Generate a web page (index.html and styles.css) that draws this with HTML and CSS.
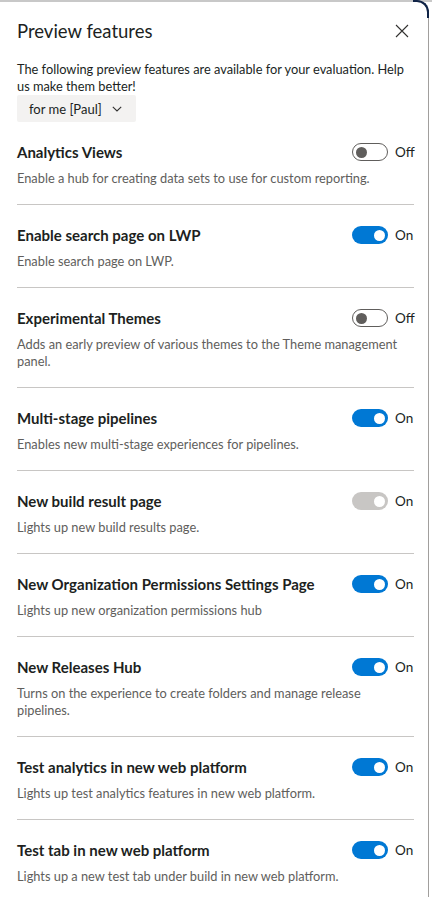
FILE: index.html
```html
<!DOCTYPE html>
<html lang="en">
<head>
<meta charset="utf-8">
<title>Preview features</title>
<link rel="stylesheet" href="styles.css">
</head>
<body>
<div class="frame">
  <div class="panel">
    <div class="header">
      <h1 class="title">Preview features</h1>
      <button class="close" aria-label="Close">
        <svg width="14" height="14" viewBox="0 0 14 14"><path d="M1 1 L13 13 M13 1 L1 13" stroke="#323130" stroke-width="1.1" fill="none"/></svg>
      </button>
    </div>
    <p class="intro">The following preview features are available for your evaluation. Help us make them better!</p>
    <button class="scope">for me [Paul]
      <svg width="10" height="6" viewBox="0 0 10 6"><path d="M0.8 0.8 L5 5 L9.2 0.8" stroke="#323130" stroke-width="1.1" fill="none"/></svg>
    </button>
    <ul class="features">
      <li class="feature">
        <div class="row"><span class="name">Analytics Views</span><span class="toggle off"><span class="knob"></span></span><span class="state">Off</span></div>
        <p class="desc">Enable a hub for creating data sets to use for custom reporting.</p>
      </li>
      <li class="feature">
        <div class="row"><span class="name">Enable search page on LWP</span><span class="toggle on"><span class="knob"></span></span><span class="state">On</span></div>
        <p class="desc">Enable search page on LWP.</p>
      </li>
      <li class="feature">
        <div class="row"><span class="name">Experimental Themes</span><span class="toggle off"><span class="knob"></span></span><span class="state">Off</span></div>
        <p class="desc">Adds an early preview of various themes to the Theme management panel.</p>
      </li>
      <li class="feature">
        <div class="row"><span class="name">Multi-stage pipelines</span><span class="toggle on"><span class="knob"></span></span><span class="state">On</span></div>
        <p class="desc">Enables new multi-stage experiences for pipelines.</p>
      </li>
      <li class="feature">
        <div class="row"><span class="name">New build result page</span><span class="toggle disabled"><span class="knob"></span></span><span class="state">On</span></div>
        <p class="desc">Lights up new build results page.</p>
      </li>
      <li class="feature">
        <div class="row"><span class="name">New Organization Permissions Settings Page</span><span class="toggle on"><span class="knob"></span></span><span class="state">On</span></div>
        <p class="desc">Lights up new organization permissions hub</p>
      </li>
      <li class="feature">
        <div class="row"><span class="name">New Releases Hub</span><span class="toggle on"><span class="knob"></span></span><span class="state">On</span></div>
        <p class="desc">Turns on the experience to create folders and manage release pipelines.</p>
      </li>
      <li class="feature">
        <div class="row"><span class="name">Test analytics in new web platform</span><span class="toggle on"><span class="knob"></span></span><span class="state">On</span></div>
        <p class="desc">Lights up test analytics features in new web platform.</p>
      </li>
      <li class="feature">
        <div class="row"><span class="name">Test tab in new web platform</span><span class="toggle on"><span class="knob"></span></span><span class="state">On</span></div>
        <p class="desc">Lights up a new test tab under build in new web platform.</p>
      </li>
    </ul>
  </div>
</div>
</body>
</html>
```

FILE: styles.css
```css
* { box-sizing: border-box; }
html, body { margin: 0; padding: 0; }
body {
  width: 432px;
  height: 897px;
  overflow: hidden;
  background: #fff;
  font-family: "Lato", "Liberation Sans", sans-serif;
  color: #201f1e;
}
.frame {
  height: 100%;
  padding: 2px 3px 0 0;
  background: linear-gradient(#c8c8c8 2px, #fff 2px);
}
.panel {
  position: relative;
  height: 100%;
  background: #fff;
  border-right: 1px solid #a19f9d;
  border-top-right-radius: 12px;
  padding: 0 14px 0 17px;
}
.panel::before {
  content: "";
  position: absolute;
  top: -2px;
  right: -1px;
  width: 14px;
  height: 16px;
  border-top: 2px solid #0f2346;
  border-right: 2px solid #0f2346;
  border-top-right-radius: 12px;
}
.header {
  display: flex;
  align-items: center;
  justify-content: space-between;
  height: 56px;
  padding-top: 2px;
}
.title {
  margin: 0;
  font-size: 18.5px;
  font-weight: 400;
  color: #201f1e;
}
.close {
  border: 0;
  background: none;
  padding: 0;
  width: 24px;
  height: 24px;
  display: flex;
  align-items: center;
  justify-content: center;
}
.intro {
  margin: 3px 0 0;
  font-size: 12.8px;
  line-height: 17px;
  color: #201f1e;
}
.scope {
  margin-top: 0;
  display: inline-flex;
  align-items: center;
  gap: 10px;
  height: 27px;
  padding: 0 14px 0 12px;
  border: 0;
  border-radius: 2px;
  background: #f3f2f1;
  font-family: inherit;
  font-size: 13px;
  color: #201f1e;
}
.features {
  list-style: none;
  margin: 0;
  padding: 0;
}
.feature {
  padding: 20px 0 17px;
  border-bottom: 1px solid #c8c6c4;
}
.feature:last-child { border-bottom: 0; }
.row {
  display: flex;
  align-items: center;
  height: 20px;
}
.name {
  flex: 1;
  font-size: 15px;
  font-weight: 700;
  color: #201f1e;
}
.toggle {
  width: 36px;
  height: 18px;
  border-radius: 9px;
  display: flex;
  align-items: center;
  padding: 0 3px;
}
.toggle .knob {
  width: 11px;
  height: 11px;
  border-radius: 50%;
}
.toggle.off {
  border: 1px solid #605e5c;
  background: #fff;
}
.toggle.off .knob { background: #605e5c; }
.toggle.on { background: #0078d4; justify-content: flex-end; }
.toggle.on .knob { background: #fff; }
.toggle.disabled { background: #c8c6c4; justify-content: flex-end; }
.toggle.disabled .knob { background: #fff; }
.state {
  width: 19px;
  margin-left: 7px;
  font-size: 13.5px;
  color: #201f1e;
  white-space: nowrap;
}
.desc {
  margin: 8px 0 0;
  font-size: 12.8px;
  line-height: 17px;
  color: #605e5c;
}
```
